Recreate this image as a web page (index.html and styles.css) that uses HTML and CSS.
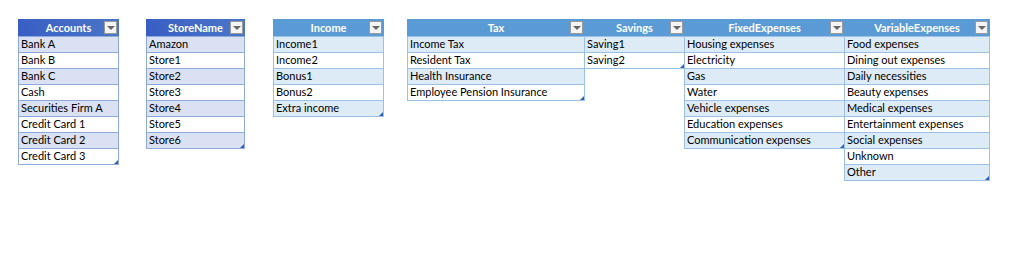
FILE: index.html
```html
<!DOCTYPE html>
<html>
<head>
<meta charset="utf-8">
<link rel="stylesheet" href="styles.css">
</head>
<body>
<div class="sheet">
  <div class="tbl dark w-acc">
    <div class="hdr">Accounts<span class="dd"></span></div>
    <div class="row band">Bank A</div>
    <div class="row">Bank B</div>
    <div class="row band">Bank C</div>
    <div class="row">Cash</div>
    <div class="row band">Securities Firm A</div>
    <div class="row">Credit Card 1</div>
    <div class="row band">Credit Card 2</div>
    <div class="row last">Credit Card 3<span class="rs"></span></div>
  </div>
  <div class="tbl dark w-store">
    <div class="hdr">StoreName<span class="dd"></span></div>
    <div class="row band">Amazon</div>
    <div class="row">Store1</div>
    <div class="row band">Store2</div>
    <div class="row">Store3</div>
    <div class="row band">Store4</div>
    <div class="row">Store5</div>
    <div class="row band last">Store6<span class="rs"></span></div>
  </div>
  <div class="tbl light w-inc">
    <div class="hdr">Income<span class="dd"></span></div>
    <div class="row band">Income1</div>
    <div class="row">Income2</div>
    <div class="row band">Bonus1</div>
    <div class="row">Bonus2</div>
    <div class="row band last">Extra income<span class="rs"></span></div>
  </div>
  <div class="group">
    <div class="tbl light w-tax">
      <div class="hdr">Tax<span class="dd"></span></div>
      <div class="row band">Income Tax</div>
      <div class="row">Resident Tax</div>
      <div class="row band">Health Insurance</div>
      <div class="row last">Employee Pension Insurance<span class="rs"></span></div>
    </div>
    <div class="tbl light w-sav">
      <div class="hdr">Savings<span class="dd"></span></div>
      <div class="row band">Saving1</div>
      <div class="row last">Saving2<span class="rs"></span></div>
    </div>
    <div class="tbl light w-fix">
      <div class="hdr">FixedExpenses<span class="dd"></span></div>
      <div class="row band">Housing expenses</div>
      <div class="row">Electricity</div>
      <div class="row band">Gas</div>
      <div class="row">Water</div>
      <div class="row band">Vehicle expenses</div>
      <div class="row">Education expenses</div>
      <div class="row band last">Communication expenses<span class="rs"></span></div>
    </div>
    <div class="tbl light w-var">
      <div class="hdr">VariableExpenses<span class="dd"></span></div>
      <div class="row band">Food expenses</div>
      <div class="row">Dining out expenses</div>
      <div class="row band">Daily necessities</div>
      <div class="row">Beauty expenses</div>
      <div class="row band">Medical expenses</div>
      <div class="row">Entertainment expenses</div>
      <div class="row band">Social expenses</div>
      <div class="row">Unknown</div>
      <div class="row band last">Other<span class="rs"></span></div>
    </div>
  </div>
</div>
</body>
</html>
```
FILE: styles.css
```css
html, body {
  margin: 0;
  padding: 0;
  background: #ffffff;
}
body {
  width: 1024px;
  height: 266px;
  overflow: hidden;
  font-family: Lato, "Liberation Sans", sans-serif;
  font-size: 11px;
  color: #000;
}
.sheet {
  display: flex;
  align-items: flex-start;
  padding: 19px 0 0 18px;
}
.group {
  display: flex;
  align-items: flex-start;
  margin-left: 23px;
}
.tbl {
  box-sizing: border-box;
  border: 1px solid #9bc2e6;
  border-top: none;
  display: flex;
  flex-direction: column;
}
.dark { border-color: #8ea9db; }
.w-acc { width: 101px; }
.w-store { width: 99px; margin-left: 27px; }
.w-inc { width: 111px; margin-left: 28px; }
.w-tax { width: 178px; }
.w-sav { width: 101px; margin-left: -1px; }
.w-fix { width: 161px; margin-left: -1px; }
.w-var { width: 146px; margin-left: -1px; }

.hdr {
  position: relative;
  height: 17px;
  line-height: 17px;
  margin: 0 -1px;
  background: #5b9bd5;
  color: #fff;
  font-weight: bold;
  text-align: center;
}
.dark .hdr { background: linear-gradient(90deg, #3a5ec4, #4a76c8); }
.dd {
  position: absolute;
  right: 2px;
  top: 2px;
  width: 13px;
  height: 13px;
  box-sizing: border-box;
  background: #f4f4f4;
  border: 1px solid #9a9a9a;
}
.dd::after {
  content: "";
  position: absolute;
  left: 2px;
  top: 4px;
  border-left: 4px solid transparent;
  border-right: 4px solid transparent;
  border-top: 4px solid #666666;
}
.row {
  position: relative;
  box-sizing: border-box;
  height: 16px;
  line-height: 14px;
  padding-left: 2px;
  border-top: 1px solid #9bc2e6;
  white-space: nowrap;
  background: #fff;
}
.dark .row { border-top-color: #8ea9db; }
.row.band { background: #ddebf7; }
.dark .row.band { background: #d9e1f2; }
.rs {
  position: absolute;
  right: 0;
  bottom: 0;
  width: 0;
  height: 0;
  border-left: 4px solid transparent;
  border-bottom: 4px solid #2e5fb0;
}
```
